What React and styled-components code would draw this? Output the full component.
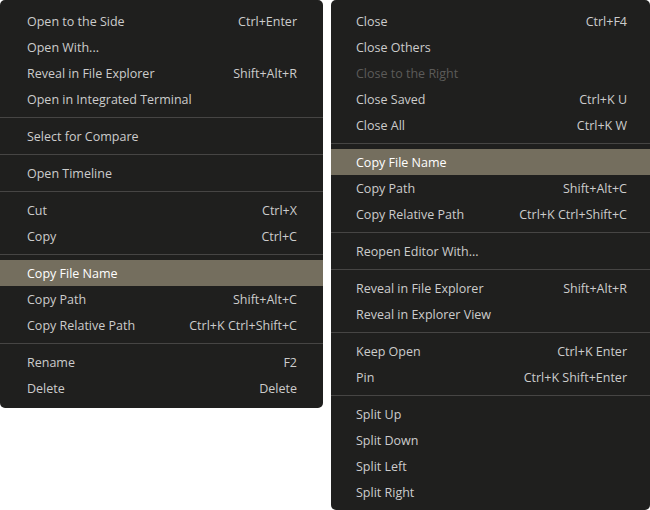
import React from "react";
import styled, { createGlobalStyle } from "styled-components";

const Global = createGlobalStyle`
  html, body { margin: 0; padding: 0; background: #ffffff; }
  body { font-family: "Open Sans", "Noto Sans", sans-serif; }
`;

const Page = styled.div`
  display: flex;
  align-items: flex-start;
  gap: 8px;
  width: 650px;
  height: 510px;
  overflow: hidden;
`;

const Menu = styled.div`
  flex: none;
  width: ${(p) => p.$width}px;
  box-sizing: border-box;
  background: #1f1f1e;
  border-radius: 5px;
  padding: 8px 0 ${(p) => p.$bottom}px;
  display: flex;
  flex-direction: column;
`;

const Row = styled.div`
  height: 26px;
  display: flex;
  align-items: center;
  justify-content: space-between;
  padding: 0 ${(p) => p.$pr}px 0 ${(p) => p.$pl}px;
  font-size: 12.5px;
  color: ${(p) => (p.$disabled ? "#5c5b59" : p.$active ? "#ffffff" : "#cccccc")};
  background: ${(p) => (p.$active ? "#746e5e" : "transparent")};
  white-space: nowrap;
`;

const Key = styled.span`
  color: inherit;
`;

const Sep = styled.div`
  height: 1px;
  margin: 5px 0;
  background: #464544;
`;

const left = [
  [["Open to the Side", "Ctrl+Enter"], ["Open With..."], ["Reveal in File Explorer", "Shift+Alt+R"], ["Open in Integrated Terminal"]],
  [["Select for Compare"]],
  [["Open Timeline"]],
  [["Cut", "Ctrl+X"], ["Copy", "Ctrl+C"]],
  [["Copy File Name", "", "active"], ["Copy Path", "Shift+Alt+C"], ["Copy Relative Path", "Ctrl+K Ctrl+Shift+C"]],
  [["Rename", "F2"], ["Delete", "Delete"]],
];

const right = [
  [["Close", "Ctrl+F4"], ["Close Others"], ["Close to the Right", "", "disabled"], ["Close Saved", "Ctrl+K U"], ["Close All", "Ctrl+K W"]],
  [["Copy File Name", "", "active"], ["Copy Path", "Shift+Alt+C"], ["Copy Relative Path", "Ctrl+K Ctrl+Shift+C"]],
  [["Reopen Editor With..."]],
  [["Reveal in File Explorer", "Shift+Alt+R"], ["Reveal in Explorer View"]],
  [["Keep Open", "Ctrl+K Enter"], ["Pin", "Ctrl+K Shift+Enter"]],
  [["Split Up"], ["Split Down"], ["Split Left"], ["Split Right"]],
];

function ContextMenu({ groups, width, pl, pr, bottom }) {
  return (
    <Menu $width={width} $bottom={bottom}>
      {groups.map((g, gi) => (
        <React.Fragment key={gi}>
          {gi > 0 && <Sep />}
          {g.map(([label, key, state]) => (
            <Row
              key={label}
              $pl={pl}
              $pr={pr}
              $active={state === "active"}
              $disabled={state === "disabled"}
            >
              <span>{label}</span>
              {key ? <Key>{key}</Key> : null}
            </Row>
          ))}
        </React.Fragment>
      ))}
    </Menu>
  );
}

export default function App() {
  return (
    <>
      <Global />
      <Page>
        <ContextMenu groups={left} width={323} pl={27} pr={26} bottom={7} />
        <ContextMenu groups={right} width={319} pl={25} pr={23} bottom={5} />
      </Page>
    </>
  );
}
